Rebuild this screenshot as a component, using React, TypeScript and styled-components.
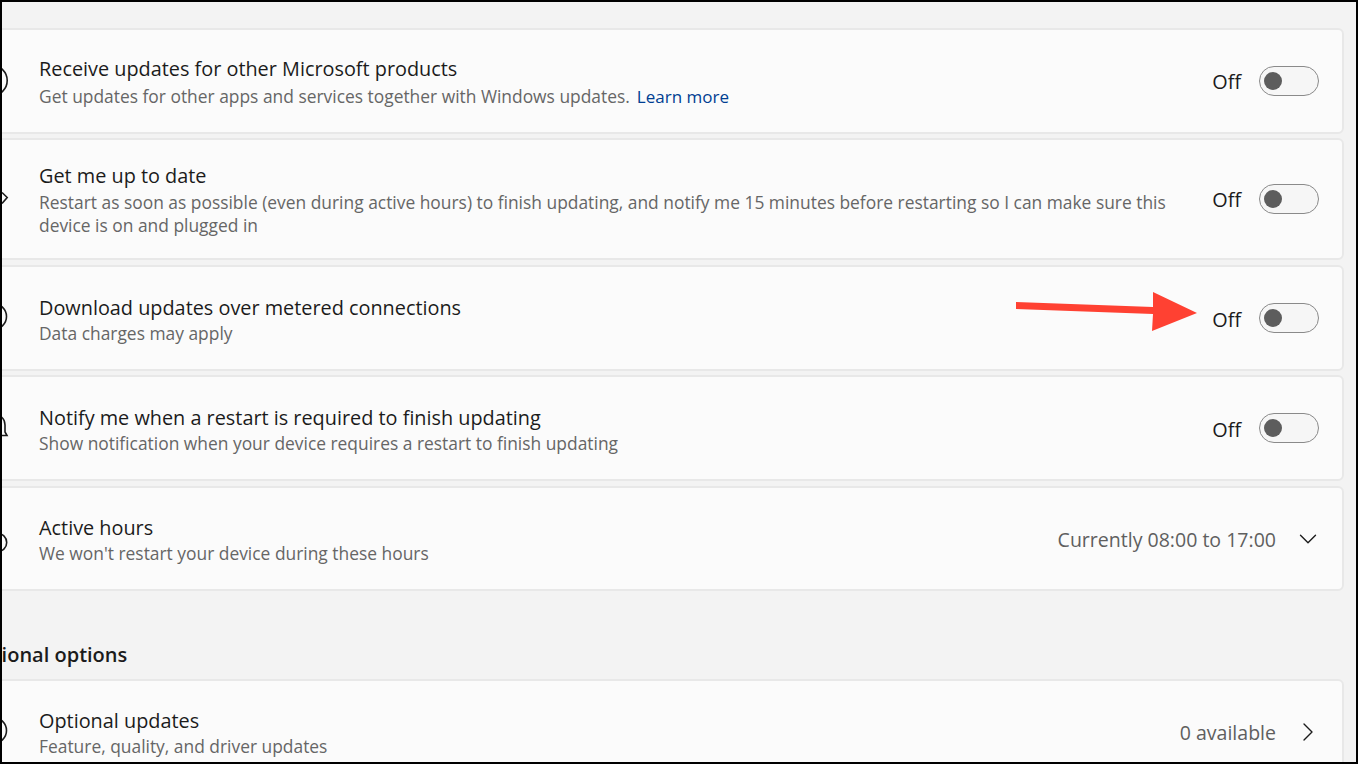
import React from 'react'
import styled, { createGlobalStyle } from 'styled-components'
import { ChevronDown, ChevronRight } from 'lucide-react'

const GlobalStyle = createGlobalStyle`
  html, body {
    margin: 0;
    padding: 0;
    background: #f3f3f3;
  }
  * {
    box-sizing: border-box;
  }
`

const Frame = styled.div`
  position: relative;
  width: 1358px;
  height: 764px;
  overflow: hidden;
  background: #f3f3f3;
  border: 2px solid #000;
  font-family: 'Open Sans', 'Noto Sans', sans-serif;
`

const Content = styled.div`
  display: flex;
  flex-direction: column;
  margin: 26px 12px 0 -30px;
`

const Card = styled.div<{ $height: number; $gap?: number }>`
  flex: none;
  display: flex;
  align-items: center;
  height: ${(p) => p.$height}px;
  margin-bottom: ${(p) => p.$gap ?? 5}px;
  padding: 0 23px 0 11px;
  background: #fbfbfb;
  border: 2px solid #e8e8e8;
  border-radius: 6px;
`

const IconSlot = styled.svg`
  flex: none;
  width: 24px;
  height: 24px;
  margin-right: 30px;
  overflow: visible;
  fill: none;
  stroke: #1b1b1b;
  stroke-width: 1.6;
`

const TextBlock = styled.div<{ $top?: number }>`
  flex: 1;
  min-width: 0;
  padding-top: ${(p) => p.$top ?? 2}px;
`

const Title = styled.div`
  font-size: 19.85px;
  line-height: 27px;
  color: #1b1b1b;
`

const Description = styled.div<{ $push?: number }>`
  max-width: 1150px;
  margin-top: ${(p) => p.$push ?? 1}px;
  font-size: 17.4px;
  line-height: 23px;
  color: #666;
`

const LearnMore = styled.a`
  margin-left: 7px;
  font-size: 17px;
  color: #003e92;
`

const Status = styled.div<{ $raised?: boolean }>`
  padding-top: ${(p) => (p.$raised ? 0 : 2)}px;
  font-size: 19.85px;
  color: #1b1b1b;
  margin-right: 18px;
`

const Toggle = styled.div`
  flex: none;
  display: flex;
  align-items: center;
  width: 60px;
  height: 30px;
  padding-left: 4px;
  background: #f6f6f6;
  border: 1.5px solid #8a8a8a;
  border-radius: 15px;
`

const Knob = styled.div`
  width: 18px;
  height: 18px;
  border-radius: 50%;
  background: #5d5d5d;
`

const Value = styled.div`
  padding-top: 2px;
  font-size: 19.55px;
  color: #5f5f5f;
  margin-right: 21px;
`

const ChevronBox = styled.div`
  flex: none;
  display: flex;
  justify-content: center;
  width: 22px;
  color: #1b1b1b;

  svg {
    flex: none;
  }
`

const SectionHeading = styled.div`
  flex: none;
  margin: 50px 0 10px -22px;
  font-size: 20px;
  line-height: 28px;
  font-weight: 600;
  color: #1b1b1b;
  white-space: nowrap;
`

const Arrow = styled.svg`
  position: absolute;
  left: 1014px;
  top: 288px;
`

const arcIcon = (cx: number, cy: number, r: number) => <circle cx={cx} cy={cy} r={r} />

const OffToggle = ({ raised }: { raised?: boolean }) => (
  <>
    <Status $raised={raised}>Off</Status>
    <Toggle>
      <Knob />
    </Toggle>
  </>
)

export default function App() {
  return (
    <>
      <GlobalStyle />
      <Frame>
        <Content>
          <Card $height={106} $gap={4}>
            <IconSlot viewBox="0 0 24 24">{arcIcon(7.2, 11.5, 15)}</IconSlot>
            <TextBlock $top={1}>
              <Title>Receive updates for other Microsoft products</Title>
              <Description $push={3}>
                Get updates for other apps and services together with Windows updates.
                <LearnMore>Learn more</LearnMore>
              </Description>
            </TextBlock>
            <OffToggle raised />
          </Card>
          <Card $height={122}>
            <IconSlot viewBox="0 0 24 24">
              <path d="M17 5.5l5.2 5-5.2 6" />
            </IconSlot>
            <TextBlock $top={1}>
              <Title>Get me up to date</Title>
              <Description $push={2}>
                Restart as soon as possible (even during active hours) to finish updating, and notify me 15 minutes before restarting so I can make sure this device is on and plugged in
              </Description>
            </TextBlock>
            <OffToggle raised />
          </Card>
          <Card $height={106} $gap={4}>
            <IconSlot viewBox="0 0 24 24">{arcIcon(9, 10.5, 12.5)}</IconSlot>
            <TextBlock>
              <Title>Download updates over metered connections</Title>
              <Description>Data charges may apply</Description>
            </TextBlock>
            <OffToggle />
          </Card>
          <Card $height={106}>
            <IconSlot viewBox="0 0 24 24">
              <path d="M16.5 1C19 3 20 6 20 9v7l2 3.5H8" />
            </IconSlot>
            <TextBlock>
              <Title>Notify me when a restart is required to finish updating</Title>
              <Description>Show notification when your device requires a restart to finish updating</Description>
            </TextBlock>
            <OffToggle />
          </Card>
          <Card $height={105} $gap={0}>
            <IconSlot viewBox="0 0 24 24">{arcIcon(12.7, 15.5, 9)}</IconSlot>
            <TextBlock>
              <Title>Active hours</Title>
              <Description>We won't restart your device during these hours</Description>
            </TextBlock>
            <Value>Currently 08:00 to 17:00</Value>
            <ChevronBox>
              <ChevronDown size={30} strokeWidth={1.1} />
            </ChevronBox>
          </Card>
          <SectionHeading>Additional options</SectionHeading>
          <Card $height={105}>
            <IconSlot viewBox="0 0 24 24">{arcIcon(9, 10.5, 12.5)}</IconSlot>
            <TextBlock>
              <Title>Optional updates</Title>
              <Description>Feature, quality, and driver updates</Description>
            </TextBlock>
            <Value>0 available</Value>
            <ChevronBox>
              <ChevronRight size={32} strokeWidth={1} />
            </ChevronBox>
          </Card>
        </Content>
        <Arrow width="190" height="48" viewBox="0 0 190 48">
          <polygon points="0,12 137,17 137,2 181,23 136,41 137,24 0,19" fill="#ff4132" />
        </Arrow>
      </Frame>
    </>
  )
}
